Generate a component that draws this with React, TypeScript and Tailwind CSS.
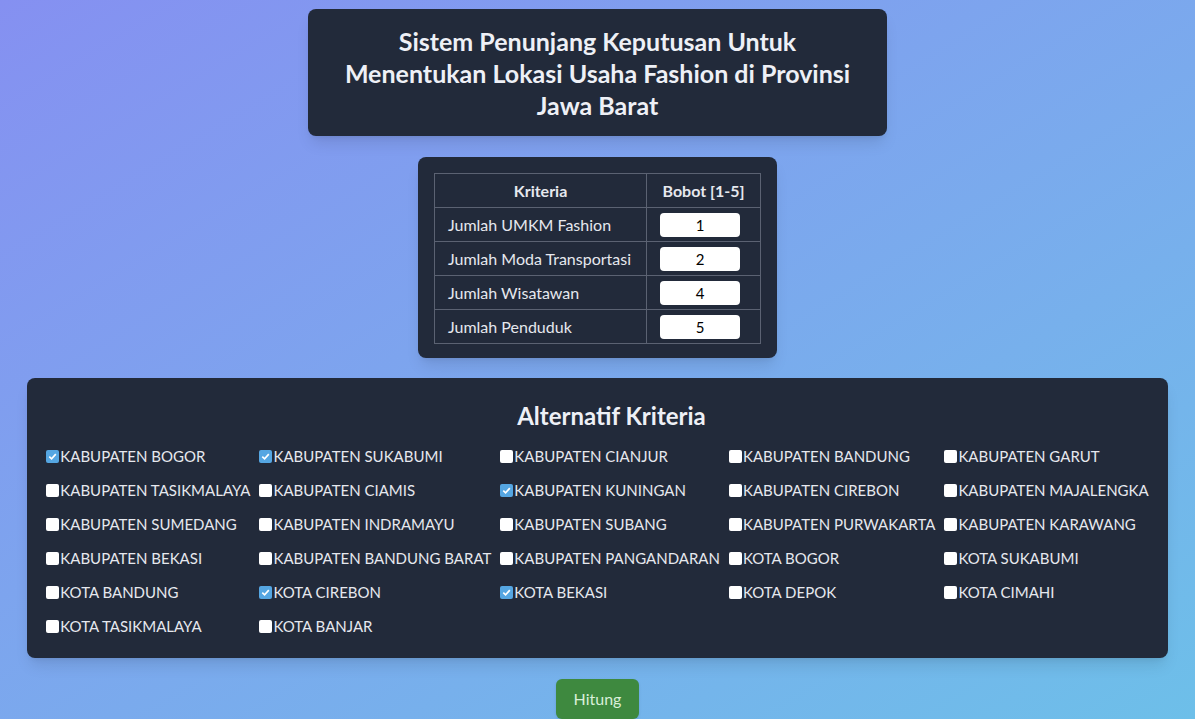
import { useState } from "react";

const criteria = [
  { name: "Jumlah UMKM Fashion", weight: "1" },
  { name: "Jumlah Moda Transportasi", weight: "2" },
  { name: "Jumlah Wisatawan", weight: "4" },
  { name: "Jumlah Penduduk", weight: "5" },
];

const regions: [string, boolean][] = [
  ["KABUPATEN BOGOR", true],
  ["KABUPATEN SUKABUMI", true],
  ["KABUPATEN CIANJUR", false],
  ["KABUPATEN BANDUNG", false],
  ["KABUPATEN GARUT", false],
  ["KABUPATEN TASIKMALAYA", false],
  ["KABUPATEN CIAMIS", false],
  ["KABUPATEN KUNINGAN", true],
  ["KABUPATEN CIREBON", false],
  ["KABUPATEN MAJALENGKA", false],
  ["KABUPATEN SUMEDANG", false],
  ["KABUPATEN INDRAMAYU", false],
  ["KABUPATEN SUBANG", false],
  ["KABUPATEN PURWAKARTA", false],
  ["KABUPATEN KARAWANG", false],
  ["KABUPATEN BEKASI", false],
  ["KABUPATEN BANDUNG BARAT", false],
  ["KABUPATEN PANGANDARAN", false],
  ["KOTA BOGOR", false],
  ["KOTA SUKABUMI", false],
  ["KOTA BANDUNG", false],
  ["KOTA CIREBON", true],
  ["KOTA BEKASI", true],
  ["KOTA DEPOK", false],
  ["KOTA CIMAHI", false],
  ["KOTA TASIKMALAYA", false],
  ["KOTA BANJAR", false],
];

function Check({ checked, onClick }: { checked: boolean; onClick: () => void }) {
  return (
    <span
      onClick={onClick}
      className={
        checked
          ? "flex h-[13px] w-[13px] shrink-0 items-center justify-center rounded-[2px] bg-[#55a6e2]"
          : "flex h-[13px] w-[13px] shrink-0 rounded-[2px] bg-white"
      }
    >
      {checked && (
        <svg viewBox="0 0 12 12" className="h-[11px] w-[11px]">
          <path d="M2.5 6.2 L5 8.6 L9.6 3.4" fill="none" stroke="white" strokeWidth="1.8" />
        </svg>
      )}
    </span>
  );
}

export default function App() {
  const [picked, setPicked] = useState(regions.map((r) => r[1]));

  return (
    <div className="min-h-screen bg-linear-to-br from-[#8590f1] to-[#6dbfe9] px-[27px] pt-[9px] font-['Lato',sans-serif]">
      <div className="mx-auto w-[579px] rounded-lg bg-[#222a3a] px-6 pt-4 pb-[15px] shadow-lg">
        <h1 className="text-center text-[25px] leading-8 font-bold text-[#eef0f6]">
          Sistem Penunjang Keputusan Untuk
          <br />
          Menentukan Lokasi Usaha Fashion di Provinsi
          <br />
          Jawa Barat
        </h1>
      </div>

      <div className="mx-auto mt-[21px] w-fit rounded-lg bg-[#222a3a] px-4 pt-4 pb-[14px] shadow-lg">
        <table className="border-collapse text-base text-[#e6e8ee]">
          <thead>
            <tr className="h-[34px]">
              <th className="border border-[#5b6272] px-[14px] font-bold">Kriteria</th>
              <th className="border border-[#5b6272] px-[14px] font-bold">Bobot [1-5]</th>
            </tr>
          </thead>
          <tbody>
            {criteria.map((c) => (
              <tr key={c.name} className="h-[34px]">
                <td className="border border-[#5b6272] px-[13px] pr-[15px] text-left">{c.name}</td>
                <td className="border border-[#5b6272] px-[13px] pr-[20px]">
                  <input
                    defaultValue={c.weight}
                    className="block h-6 w-20 rounded bg-white text-center text-[15px] text-black outline-none"
                  />
                </td>
              </tr>
            ))}
          </tbody>
        </table>
      </div>

      <div className="mt-5 rounded-lg bg-[#222a3a] px-[21px] pt-[22px] pb-[15px] shadow-lg">
        <h2 className="pl-[28px] text-center text-2xl font-bold text-[#eef0f6]">Alternatif Kriteria</h2>
        <div className="mt-[7px] grid grid-cols-[repeat(5,auto)] justify-center gap-x-[9px]">
          {regions.map(([name], i) => (
            <label key={name} className="flex h-[34px] items-center whitespace-nowrap text-[15px] text-[#e6e8ee]">
              <Check
                checked={picked[i]}
                onClick={() => setPicked(picked.map((p, j) => (j === i ? !p : p)))}
              />
              <span className="ml-px">{name}</span>
            </label>
          ))}
        </div>
      </div>

      <div className="mt-[21px] flex justify-center">
        <button className="h-10 rounded-md bg-[#3e893f] px-[18px] text-base text-[#d9efd9] shadow">
          Hitung
        </button>
      </div>
    </div>
  );
}
